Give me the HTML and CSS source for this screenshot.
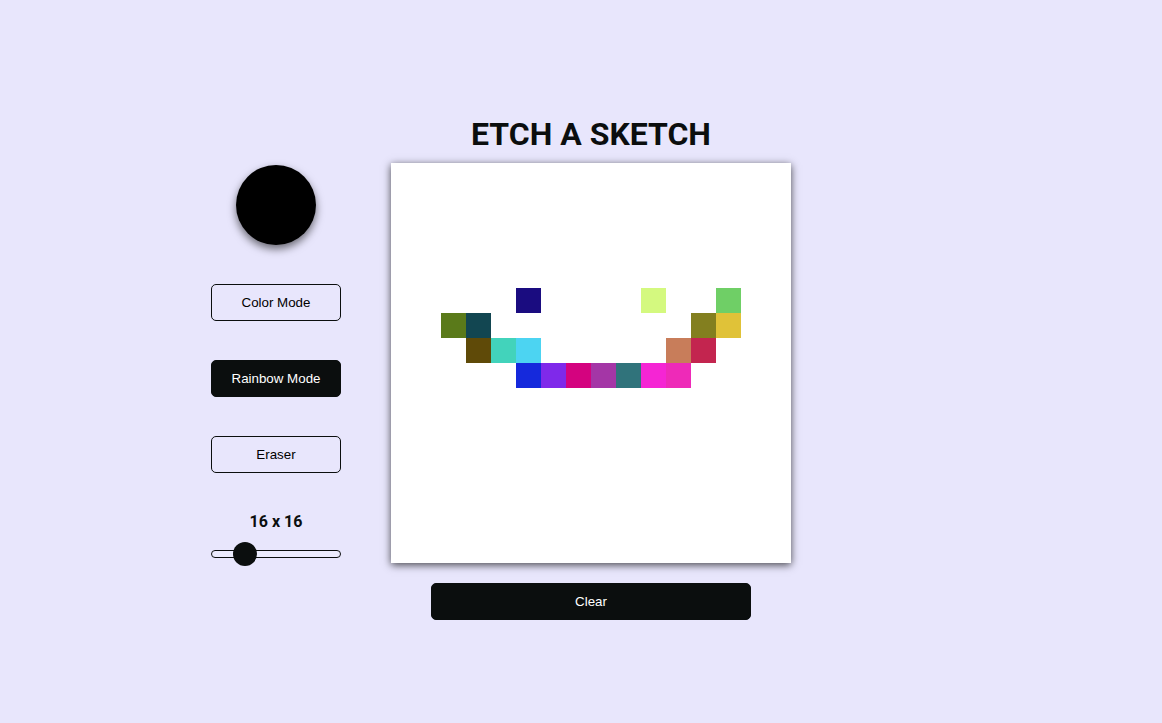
FILE: index.html
```html
<!DOCTYPE html>
<html lang="en">
<head>
<meta charset="utf-8">
<title>Etch a Sketch</title>
<link rel="stylesheet" href="styles.css">
</head>
<body>
<main class="layout">
  <h1 class="title">ETCH A SKETCH</h1>
  <aside class="controls">
    <div class="swatch"></div>
    <button class="btn">Color Mode</button>
    <button class="btn btn-active">Rainbow Mode</button>
    <button class="btn">Eraser</button>
    <div class="size-label">16 x 16</div>
    <input class="size-slider" type="range" min="0" max="80" value="16">
  </aside>
  <div class="board">
    <div class="cell" style="grid-area:6/6;background:#1a0c80"></div>
    <div class="cell" style="grid-area:6/11;background:#d4f97f"></div>
    <div class="cell" style="grid-area:6/14;background:#6fcf66"></div>
    <div class="cell" style="grid-area:7/3;background:#5a7a1a"></div>
    <div class="cell" style="grid-area:7/4;background:#124651"></div>
    <div class="cell" style="grid-area:7/13;background:#837f1f"></div>
    <div class="cell" style="grid-area:7/14;background:#e0c238"></div>
    <div class="cell" style="grid-area:8/4;background:#5f4a08"></div>
    <div class="cell" style="grid-area:8/5;background:#42d3bb"></div>
    <div class="cell" style="grid-area:8/6;background:#4cd4f2"></div>
    <div class="cell" style="grid-area:8/12;background:#c87d5a"></div>
    <div class="cell" style="grid-area:8/13;background:#c3254f"></div>
    <div class="cell" style="grid-area:9/6;background:#1529dc"></div>
    <div class="cell" style="grid-area:9/7;background:#7f29ea"></div>
    <div class="cell" style="grid-area:9/8;background:#d4037f"></div>
    <div class="cell" style="grid-area:9/9;background:#a436a6"></div>
    <div class="cell" style="grid-area:9/10;background:#30737b"></div>
    <div class="cell" style="grid-area:9/11;background:#f525d4"></div>
    <div class="cell" style="grid-area:9/12;background:#ee2ab8"></div>
  </div>
  <button class="btn btn-active btn-clear">Clear</button>
</main>
</body>
</html>
```
FILE: styles.css
```css
html, body {
  margin: 0;
  padding: 0;
  background: #e8e6fc;
}
body {
  font-family: "Liberation Sans", Arial, sans-serif;
  color: #0b0e0e;
}
.layout {
  display: grid;
  grid-template-columns: 130px 400px 110px;
  grid-template-rows: auto 400px auto;
  column-gap: 50px;
  justify-content: center;
  padding-top: 115px;
}
.title {
  grid-column: 2;
  grid-row: 1;
  justify-self: center;
  margin: 0 0 10px;
  font-family: Roboto, sans-serif;
  font-weight: 700;
  font-size: 32px;
  line-height: 38px;
  color: #0b0e0e;
}
.controls {
  grid-column: 1;
  grid-row: 2;
  display: flex;
  flex-direction: column;
  align-items: center;
}
.controls > * {
  flex-shrink: 0;
}
.swatch {
  width: 80px;
  height: 80px;
  margin-top: 2px;
  border-radius: 50%;
  background: #000;
  box-shadow: 0 4px 8px rgba(0, 0, 0, 0.55);
}
.btn {
  width: 130px;
  height: 37px;
  margin-top: 39px;
  padding: 0;
  border: 1px solid #0b0e0e;
  border-radius: 5px;
  background: transparent;
  color: #000;
  font-family: "Liberation Sans", Arial, sans-serif;
  font-size: 13.333px;
  cursor: pointer;
}
.btn-active {
  background: #0b0e0e;
  color: #fff;
}
.size-label {
  margin-top: 39px;
  font-family: Roboto, sans-serif;
  font-weight: 700;
  font-size: 16px;
  line-height: 19px;
}
.size-slider {
  -webkit-appearance: none;
  appearance: none;
  width: 130px;
  height: 24px;
  margin: 11px 0 0;
  background: transparent;
}
.size-slider::-webkit-slider-runnable-track {
  height: 8px;
  border: 1px solid #0b0e0e;
  border-radius: 6px;
  background: #ecebfd;
}
.size-slider::-webkit-slider-thumb {
  -webkit-appearance: none;
  appearance: none;
  width: 24px;
  height: 24px;
  margin-top: -9px;
  border-radius: 50%;
  background: #0b0e0e;
}
.board {
  grid-column: 2;
  grid-row: 2;
  display: grid;
  grid-template-columns: repeat(16, 25px);
  grid-template-rows: repeat(16, 25px);
  background: #fff;
  box-shadow: 0 2px 8px rgba(0, 0, 0, 0.7);
}
.btn-clear {
  grid-column: 2;
  grid-row: 3;
  justify-self: center;
  width: 320px;
  margin-top: 20px;
  color: #fff;
}
```
